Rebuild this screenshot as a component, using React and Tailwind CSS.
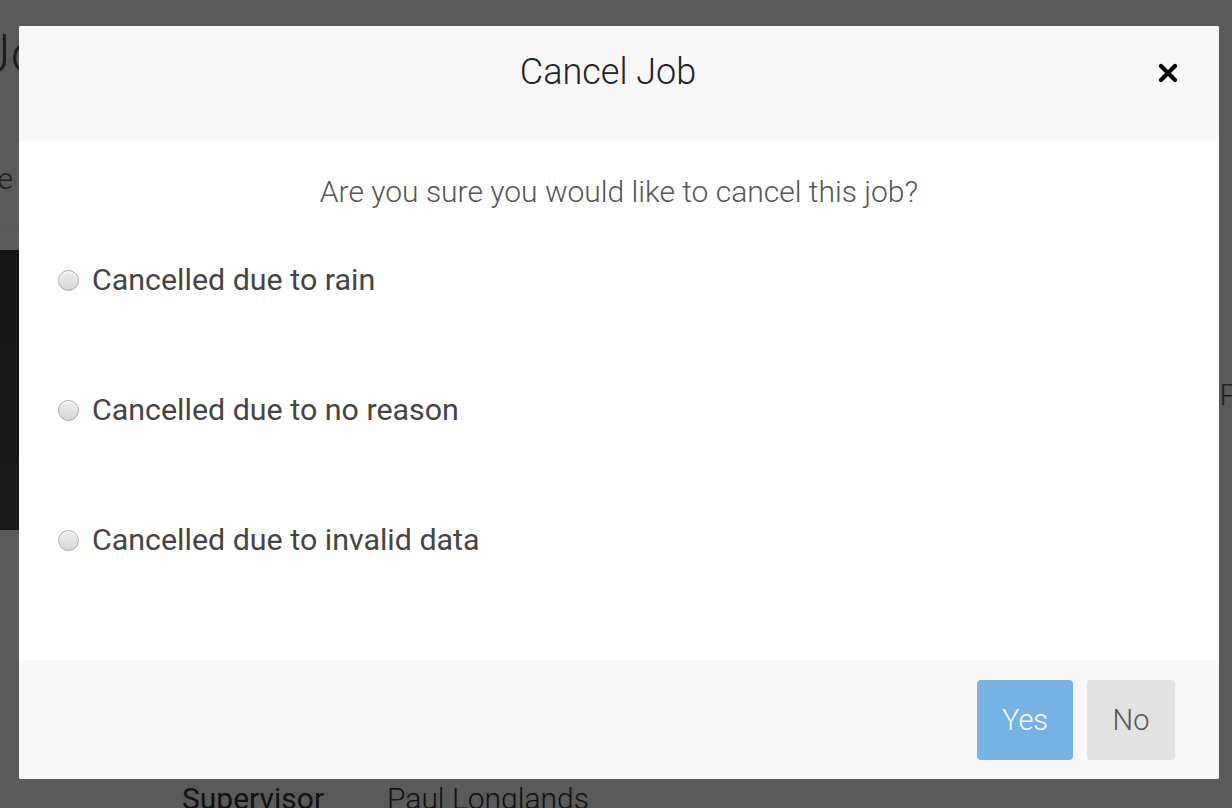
const reasons = [
    'Cancelled due to rain',
    'Cancelled due to no reason',
    'Cancelled due to invalid data',
];

const Radio = () => (
    <span className="inline-block h-[21px] w-[21px] shrink-0 rounded-full border border-[#a9a9a9] bg-gradient-to-b from-[#eeeeee] to-[#d6d6d6] shadow-[inset_0_1px_0_#fff]" />
);

const App = () => {
    return (
        <div className="relative h-[808px] w-[1232px] overflow-hidden bg-white font-['Roboto',sans-serif]">
            {/* page behind the dialog */}
            <div className="flex flex-col">
                <div className="h-[24px]" />
                <div className="-ml-[19px] text-[54px] font-light leading-[60px] text-[#555]">Jobs</div>
                <div className="-ml-[48px] mt-[72px] text-[30px] font-light text-[#555]">Date</div>
                <div className="mt-[26px] h-[1px] w-[400px] bg-[#f4f4f4]" />
                <div className="mt-[22px] h-[280px] w-[600px] bg-gradient-to-b from-[#3a3f3d] to-[#434846]" />
                <div className="mt-[246px] flex gap-[60px] pl-[182px] text-[30px] font-light text-[#333]">
                    <span className="w-[145px] font-normal">Supervisor</span>
                    <span>Paul Longlands</span>
                </div>
            </div>
            <div className="absolute right-[-6px] top-[372px] text-[30px] font-light text-[#555]">P</div>

            {/* overlay */}
            <div className="absolute inset-0 bg-black/[0.647]">
                <div className="ml-[19px] mt-[26px] flex w-[1200px] flex-col overflow-hidden rounded-[2px] bg-white">
                    <div className="relative flex h-[116px] items-center justify-center bg-[#f8f8f8] pb-[24px] pr-[22px]">
                        <h2 className="text-[36px] font-light text-[#222]">Cancel Job</h2>
                        <button className="absolute right-[41px] top-[37px] p-0">
                            <svg width="20" height="20" viewBox="0 0 20 20">
                                <path d="M3 3 L17 17 M17 3 L3 17" stroke="#000" strokeWidth="4.2" strokeLinecap="round" />
                            </svg>
                        </button>
                    </div>
                    <div className="flex h-[518px] flex-col">
                        <p className="mt-[32px] text-center text-[30px] font-light leading-[36px] text-[#555]">
                            Are you sure you would like to cancel this job?
                        </p>
                        <div className="mt-[52px] flex flex-col gap-[94px] pl-[39px]">
                            {reasons.map((r) => (
                                <label key={r} className="flex h-[36px] items-center gap-[13px] text-[30.4px] leading-[36px] text-[#444]">
                                    <Radio />
                                    <span>{r}</span>
                                </label>
                            ))}
                        </div>
                    </div>
                    <div className="flex h-[119px] items-center justify-end gap-[14px] bg-[#f8f8f8] pr-[44px]">
                        <button className="h-[80px] w-[96px] rounded-[4px] bg-[#74b3e4] pt-[2px] text-[29px] font-light text-white">Yes</button>
                        <button className="h-[80px] w-[88px] rounded-[4px] bg-[#e2e2e2] pt-[2px] text-[29px] font-light text-[#555]">No</button>
                    </div>
                </div>
            </div>
        </div>
    );
};

export default App;
